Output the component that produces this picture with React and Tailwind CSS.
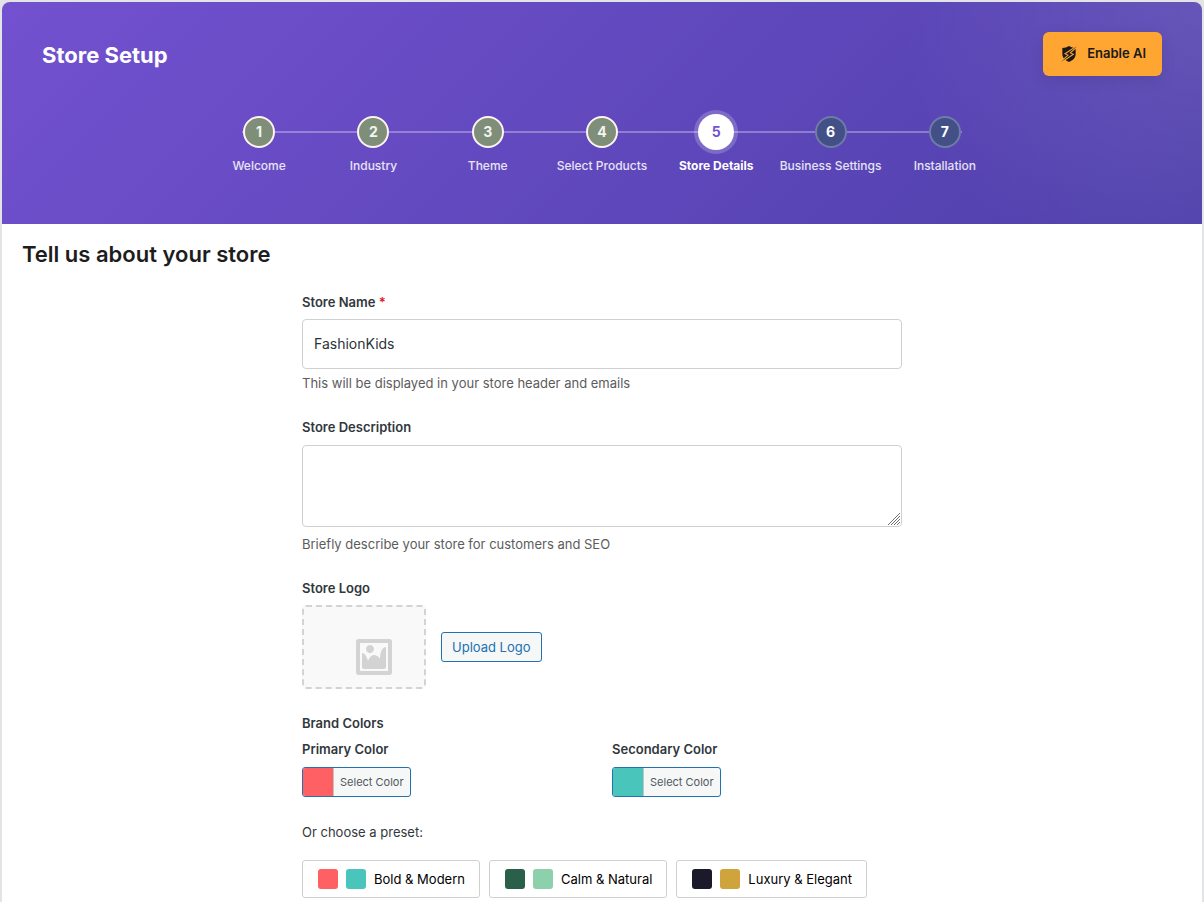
import React, { useState } from "react";

const STEPS = [
  "Welcome",
  "Industry",
  "Theme",
  "Select Products",
  "Store Details",
  "Business Settings",
  "Installation",
];
const CURRENT = 4;

const PRESETS = [
  { name: "Bold & Modern", first: "bg-[#ff6064]", second: "bg-[#49c5bb]" },
  { name: "Calm & Natural", first: "bg-[#2a5f49]", second: "bg-[#8dd1ac]" },
  { name: "Luxury & Elegant", first: "bg-[#1a1a2a]", second: "bg-[#cfa43c]" },
];

function ShieldIcon() {
  return (
    <svg viewBox="0 0 48 48" className="h-4 w-4" aria-hidden="true">
      <path
        fill="#1a1a1a"
        d="M24 0c6 4 13 6 20 6v18c0 11-8 19-20 24C12 43 4 35 4 24V6c8 0 14-2 20-6z"
      />
      <path
        fill="#1a1a1a"
        stroke="#ffa632"
        strokeWidth="6"
        paintOrder="stroke"
        d="M48 1 15 23l9 4L0 48l34-23-9-4z"
      />
    </svg>
  );
}

function ImageIcon() {
  return (
    <svg viewBox="0 0 20 20" className="h-10 w-10 fill-[#d3d3d3]" aria-hidden="true">
      <path d="M2.25 1h15.5c.69 0 1.25.56 1.25 1.25v15.5c0 .69-.56 1.25-1.25 1.25H2.25C1.56 19 1 18.44 1 17.75V2.25C1 1.56 1.56 1 2.25 1zM17 17V3H3v14h14zM10 6c0-1.1-.9-2-2-2s-2 .9-2 2 .9 2 2 2 2-.9 2-2zm3 5s0-6 3-6v10c0 .55-.45 1-1 1H5c-.55 0-1-.45-1-1V8c2 0 3 4 3 4s1-3 3-3 3 2 3 2z" />
    </svg>
  );
}

function Step({ index, label }) {
  const done = index < CURRENT;
  const current = index === CURRENT;
  const circle = current
    ? "h-9 w-9 bg-white text-[#7351d0] ring-4 ring-white/20"
    : done
      ? "h-8 w-8 border-2 border-[#fdf3f0] bg-[#7f8e78] text-white/90"
      : "h-8 w-8 border-2 border-[#6f7ba8] bg-[#435088] text-white";
  return (
    <li className="relative flex flex-1 flex-col items-center gap-2">
      <span className="flex h-9 items-center">
        <span className={`flex items-center justify-center rounded-full text-sm font-bold ${circle}`}>
          {index + 1}
        </span>
      </span>
      <span
        className={`text-xs leading-4 whitespace-nowrap ${current ? "font-bold text-white" : "font-medium text-white/85"}`}
      >
        {label}
      </span>
    </li>
  );
}

function ColorPicker({ label, swatch }) {
  return (
    <div className="flex-1">
      <div className="text-[13px] leading-5 font-semibold">{label}</div>
      <button
        type="button"
        aria-label={`${label}: Select Color`}
        className="mt-2 flex h-[30px] items-stretch overflow-hidden rounded-[3px] border border-[#2271b1] bg-[#f6f7f7]"
      >
        <span className={`w-[31px] border-r border-[#c3c4c7] ${swatch}`} />
        <span className="px-[6px] text-[11px] leading-7 text-[#50575e]">Select Color</span>
      </button>
    </div>
  );
}

export default function App() {
  const [name, setName] = useState("FashionKids");
  const [description, setDescription] = useState("");

  return (
    <div className="flex min-h-screen flex-col bg-[#e3e4e5] px-[2px] pt-[2px] font-['Inter',sans-serif] text-[#32373c]">
      <header className="rounded-t-lg bg-[radial-gradient(circle_at_top_right,rgba(255,255,255,0.1),transparent_25%),linear-gradient(135deg,#7351d0_0%,#4f40ab_100%)] px-10 pt-[30px] pb-[50px]">
        <div className="flex items-start justify-between">
          <h1 className="text-[22px] leading-[46px] font-bold text-white">Store Setup</h1>
          <button
            type="button"
            className="flex h-11 items-center gap-[10px] rounded-md bg-[#ffa632] pr-4 pl-[18px] text-[13px] font-semibold text-[#1a1a1a] shadow-[0_4px_15px_rgba(0,0,0,0.1)]"
          >
            <ShieldIcon />
            Enable AI
          </button>
        </div>
        <div className="relative mx-auto mt-9 max-w-[800px]">
          <div className="absolute inset-x-10 top-[17px] h-[2px] bg-white/30" />
          <ol className="flex">
            {STEPS.map((label, index) => (
              <Step key={label} index={index} label={label} />
            ))}
          </ol>
        </div>
      </header>

      <main className="flex-1 bg-white px-5 pt-[14px] pb-1">
        <h2 className="text-[22px] leading-8 font-semibold text-[#1d1d20]">Tell us about your store</h2>

        <form className="mx-auto mt-[22px] max-w-[600px] text-[13px] leading-5" onSubmit={(e) => e.preventDefault()}>
          <label htmlFor="store-name" className="block font-semibold">
            Store Name <span className="text-[#e0142c]">*</span>
          </label>
          <input
            id="store-name"
            type="text"
            value={name}
            onChange={(e) => setName(e.target.value)}
            className="mt-[7px] block h-[50px] w-full rounded border border-[#d0d0d0] bg-white px-[11px] pb-[2px] text-sm text-[#2c3338] outline-none"
          />
          <p className="mt-1 text-[#5c5c5c]">This will be displayed in your store header and emails</p>

          <label htmlFor="store-description" className="mt-6 block font-semibold">
            Store Description
          </label>
          <div className="relative mt-2">
            <textarea
              id="store-description"
              value={description}
              onChange={(e) => setDescription(e.target.value)}
              className="block h-[82px] w-full resize-none rounded border border-[#d0d0d0] bg-white px-[11px] py-2 text-sm outline-none"
            />
            <svg
              viewBox="0 0 14 14"
              className="pointer-events-none absolute right-px bottom-px h-[14px] w-[14px] stroke-[#707070]"
              aria-hidden="true"
            >
              <path fill="none" d="M1 13 13 1M4 13l9-9M7 13l6-6M10 13l3-3" />
            </svg>
          </div>
          <p className="mt-[7px] text-[#5c5c5c]">Briefly describe your store for customers and SEO</p>

          <div className="mt-6 font-semibold">Store Logo</div>
          <div className="mt-[7px] flex items-center gap-[15px]">
            <div className="flex h-[84px] w-[124px] items-end justify-end rounded border-2 border-dashed border-[#d3d3d3] bg-[#f9f9f9] pr-[30px] pb-[10px]">
              <ImageIcon />
            </div>
            <button
              type="button"
              className="h-[30px] rounded-[3px] border border-[#2271b1] bg-[#f6f7f7] px-[10px] text-[#2271b1]"
            >
              Upload Logo
            </button>
          </div>

          <div className="mt-6 font-semibold">Brand Colors</div>
          <div className="mt-[6px] flex gap-5">
            <ColorPicker label="Primary Color" swatch="bg-[#ff6064]" />
            <ColorPicker label="Secondary Color" swatch="bg-[#49c5bb]" />
          </div>

          <p className="mt-[25px]">Or choose a preset:</p>
          <div className="mt-[18px] flex flex-wrap gap-[9px]">
            {PRESETS.map((preset) => (
              <button
                key={preset.name}
                type="button"
                className="flex h-[38px] items-center gap-2 rounded-[3px] border border-[#d0d0d0] bg-white pr-[14px] pl-[15px] text-black"
              >
                <span className={`h-5 w-5 rounded-[3px] ${preset.first}`} />
                <span className={`h-5 w-5 rounded-[3px] ${preset.second}`} />
                {preset.name}
              </button>
            ))}
          </div>
        </form>
      </main>
    </div>
  );
}
